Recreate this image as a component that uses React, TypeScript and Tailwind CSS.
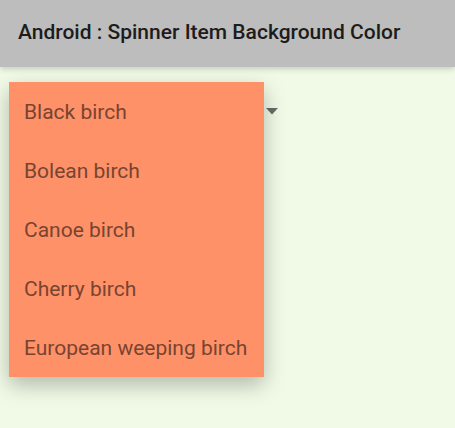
const items = [
  "Black birch",
  "Bolean birch",
  "Canoe birch",
  "Cherry birch",
  "European weeping birch",
];

export default function App() {
  return (
    <div
      className="w-[455px] h-[428px] bg-[#f0fae6] overflow-hidden"
      style={{ fontFamily: "Roboto, 'Noto Sans', sans-serif" }}
    >
      <div className="relative z-10 h-[67px] bg-[#bdbdbd] flex items-center pl-[18px] shadow-[0_2px_6px_rgba(0,0,0,0.18)]">
        <h1 className="text-[21px] font-medium text-[#1c1c1c] leading-none -mt-[3px]">
          Android : Spinner Item Background Color
        </h1>
      </div>

      <div className="relative mt-[15px] ml-[9px] w-[275px] h-[59px] flex items-center justify-end pr-[6px]">
        {/* spinner arrow */}
        <svg width="12" height="7" viewBox="0 0 12 7">
          <polygon points="0,0 12,0 6,6.5" fill="#6a6c66" />
        </svg>

        <ul className="absolute left-0 top-0 w-[255px] bg-[#ff9168] shadow-[0_8px_20px_rgba(0,0,0,0.26)] z-20">
          {items.map((it) => (
            <li
              key={it}
              className="h-[59px] flex items-center pl-[15px] pt-[3px] text-[21px] text-[#774431]"
            >
              {it}
            </li>
          ))}
        </ul>
      </div>
    </div>
  );
}
